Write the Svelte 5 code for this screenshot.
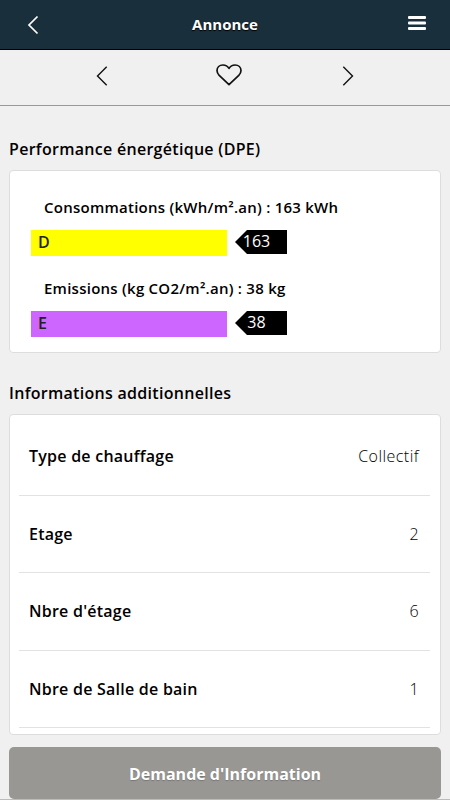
<script lang="ts">
	// Diagnostic de performance énergétique
	const ratings = [
		{ title: 'Consommations (kWh/m².an) : 163 kWh', letter: 'D', kind: 'energy', value: 163 },
		{ title: 'Emissions (kg CO2/m².an) : 38 kg', letter: 'E', kind: 'emission', value: 38 }
	];

	const details = [
		{ label: 'Type de chauffage', value: 'Collectif' },
		{ label: 'Etage', value: '2' },
		{ label: "Nbre d'étage", value: '6' },
		{ label: 'Nbre de Salle de bain', value: '1' }
	];
</script>

<div class="page">
	<header class="header">
		<button class="icon-button" aria-label="Retour">
			<svg width="12" height="20" viewBox="0 0 12 20">
				<path d="M10.5 1.5 2 10l8.5 8.5" fill="none" stroke="#fff" stroke-width="1.7" />
			</svg>
		</button>
		<h1>Annonce</h1>
		<button class="icon-button" aria-label="Menu">
			<svg width="20" height="16" viewBox="0 0 20 16">
				<rect x="1" y="1" width="18" height="3" rx="1" fill="#fff" />
				<rect x="1" y="6.5" width="18" height="3" rx="1" fill="#fff" />
				<rect x="1" y="12" width="18" height="3" rx="1" fill="#fff" />
			</svg>
		</button>
	</header>

	<nav class="toolbar">
		<button class="icon-button" aria-label="Annonce précédente">
			<svg width="12" height="20" viewBox="0 0 12 20">
				<path d="M10.7.8 1.5 10l9.2 9.2" fill="none" stroke="#111" stroke-width="1.4" />
			</svg>
		</button>
		<button class="icon-button favorite" aria-label="Ajouter aux favoris">
			<svg width="26" height="22" viewBox="0 0 26 22">
				<path
					d="M13 20.7 3.2 11.4C1.6 9.8 1 8.4 1 6.6 1 3.3 3.5 1 6.9 1 9.5 1 11.6 2 13 4.4 14.4 2 16.5 1 19.1 1 22.5 1 25 3.3 25 6.6c0 1.8-.6 3.2-2.2 4.8Z"
					fill="none"
					stroke="#111"
					stroke-width="1.7"
					stroke-linejoin="round"
				/>
			</svg>
		</button>
		<button class="icon-button" aria-label="Annonce suivante">
			<svg width="12" height="20" viewBox="0 0 12 20">
				<path d="m1.3.8 9.2 9.2-9.2 9.2" fill="none" stroke="#111" stroke-width="1.4" />
			</svg>
		</button>
	</nav>

	<main>
		<h2>Performance énergétique (DPE)</h2>
		<section class="card ratings">
			{#each ratings as rating}
				<div class="rating">
					<h3>{rating.title}</h3>
					<div class="scale">
						<div class="bar {rating.kind}">{rating.letter}</div>
						<div class="marker"><span>{rating.value}</span></div>
					</div>
				</div>
			{/each}
		</section>

		<h2 class="second">Informations additionnelles</h2>
		<section class="card details">
			{#each details as detail}
				<div class="row">
					<span class="label">{detail.label}</span>
					<span class="value">{detail.value}</span>
				</div>
			{/each}
		</section>

		<button class="contact">Demande d'Information</button>
	</main>
</div>

<style>
	:global(body) {
		background: #f0f0f0;
		overflow: hidden;
	}

	.page {
		box-sizing: border-box;
		height: 800px;
		overflow: hidden;
		background: #f0f0f0;
		border-bottom: 1px solid #bbb;
		color: #000;
		font-family: 'Open Sans', 'Noto Sans', sans-serif;
		font-size: 16px;
	}

	h1,
	h2,
	h3 {
		margin: 0;
		font-weight: 600;
	}

	button {
		border: 0;
		padding: 0;
		background: none;
		font: inherit;
	}

	.icon-button {
		display: flex;
	}

	.header {
		box-sizing: border-box;
		display: flex;
		align-items: center;
		justify-content: space-between;
		height: 50px;
		padding: 0 23px 0 27px;
		background: #192f3c;
		border-bottom: 1px solid #000;
		color: #fff;
	}

	.header h1 {
		padding: 0 0 2px 4px;
		font-size: 15px;
		font-weight: 700;
		line-height: 46px;
		text-shadow: 0 1px 1px #000;
	}

	.header .icon-button:last-child {
		padding-bottom: 3px;
	}

	.toolbar {
		box-sizing: border-box;
		display: flex;
		align-items: center;
		justify-content: space-between;
		height: 56px;
		padding: 0 96px 5px;
		border-bottom: 1px solid #999;
	}

	.toolbar .icon-button:first-child,
	.toolbar .icon-button:last-child {
		padding-top: 2px;
	}

	.toolbar .favorite {
		padding-left: 8px;
	}

	main {
		padding: 31px 9px 0;
	}

	h2 {
		font-size: 16px;
		line-height: 24px;
		letter-spacing: 0.29px;
		margin-bottom: 9px;
	}

	h2.second {
		margin-top: 28px;
	}

	.card {
		box-sizing: border-box;
		background: #fff;
		border: 1px solid #ddd;
		border-radius: 4px;
	}

	.ratings {
		display: flex;
		flex-direction: column;
		gap: 20px;
		height: 183px;
		padding: 24px 21px 0;
	}

	h3 {
		padding-left: 13px;
		font-size: 15px;
		line-height: 24px;
		letter-spacing: 0.25px;
		margin-bottom: 11px;
	}

	.scale {
		display: flex;
		gap: 8px;
		height: 26px;
	}

	.bar {
		box-sizing: border-box;
		width: 196px;
		padding-left: 7px;
		font-weight: 600;
		line-height: 24px;
		color: #222;
	}

	.bar.energy {
		background: #ff0;
	}

	.bar.emission {
		background: #c6f;
	}

	.marker {
		box-sizing: border-box;
		width: 52px;
		height: 24px;
		padding-right: 9px;
		background: #000;
		clip-path: polygon(0 50%, 12px 0, 100% 0, 100% 100%, 12px 100%);
		color: #fff;
		line-height: 23px;
		text-align: center;
	}

	.details {
		height: 321px;
		padding: 3px 10px 0 9px;
	}

	.row {
		box-sizing: border-box;
		display: flex;
		align-items: center;
		justify-content: space-between;
		height: 77.6px;
		padding: 0 11px 0 10px;
		border-bottom: 1px solid #e2e2e2;
	}

	.label {
		font-weight: 600;
		letter-spacing: 0.24px;
	}

	.value {
		font-weight: 300;
		letter-spacing: 0.45px;
	}

	.contact {
		display: block;
		width: 100%;
		height: 52px;
		margin-top: 12px;
		padding-top: 2px;
		border-radius: 5px;
		background: #999794;
		color: #fff;
		font-weight: 700;
		text-shadow: 0 1px 1px #777;
	}
</style>
